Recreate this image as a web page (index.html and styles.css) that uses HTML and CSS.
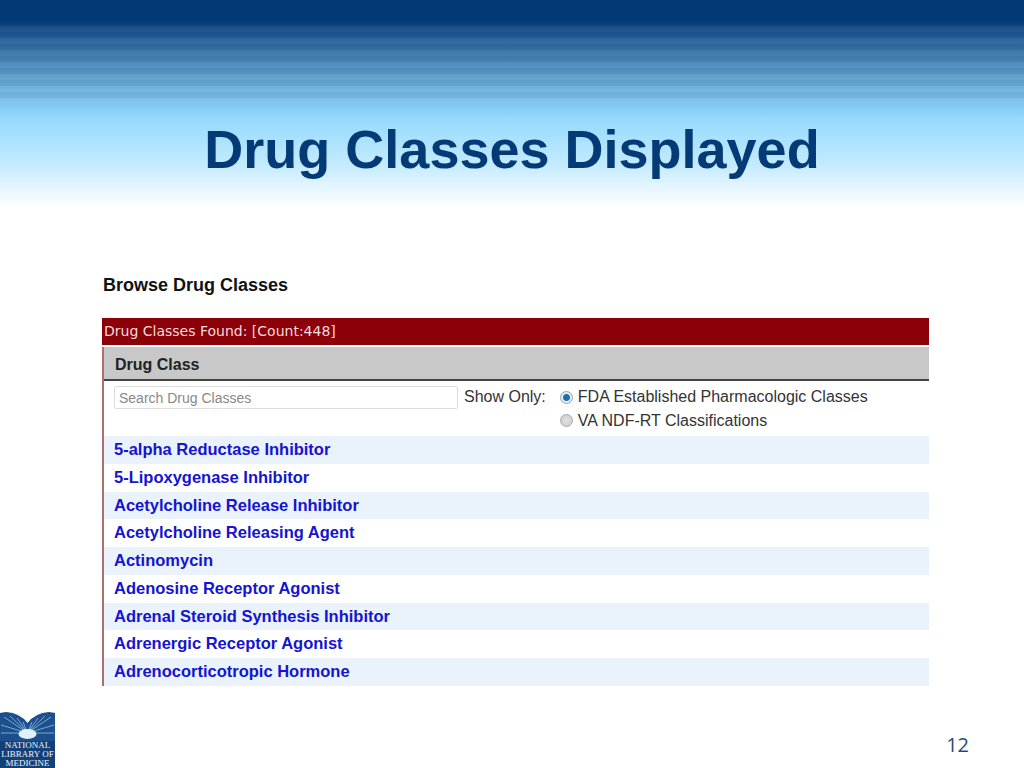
FILE: index.html
```html
<!DOCTYPE html>
<html lang="en">
<head>
    <meta charset="UTF-8">
    <title>Drug Classes Displayed</title>
    <link rel="stylesheet" href="styles.css">
</head>
<body>
    <div class="slide">
        <header class="banner">
            <h1>Drug Classes Displayed</h1>
        </header>

        <main class="content">
            <h2>Browse Drug Classes</h2>
            <div class="found-bar">Drug Classes Found: [Count:448]</div>
            <div class="panel">
                <div class="panel-head">Drug Class</div>
                <div class="filters">
                    <input class="search" type="text" placeholder="Search Drug Classes">
                    <span class="show-only">Show Only:</span>
                    <div class="options">
                        <div class="option"><span class="radio checked"></span>FDA Established Pharmacologic Classes</div>
                        <div class="option"><span class="radio"></span>VA NDF-RT Classifications</div>
                    </div>
                </div>
                <ul class="classes">
                    <li><a href="#">5-alpha Reductase Inhibitor</a></li>
                    <li><a href="#">5-Lipoxygenase Inhibitor</a></li>
                    <li><a href="#">Acetylcholine Release Inhibitor</a></li>
                    <li><a href="#">Acetylcholine Releasing Agent</a></li>
                    <li><a href="#">Actinomycin</a></li>
                    <li><a href="#">Adenosine Receptor Agonist</a></li>
                    <li><a href="#">Adrenal Steroid Synthesis Inhibitor</a></li>
                    <li><a href="#">Adrenergic Receptor Agonist</a></li>
                    <li><a href="#">Adrenocorticotropic Hormone</a></li>
                </ul>
            </div>
        </main>

        <footer class="foot">
            <div class="logo">
                <svg class="logo-art" width="55" height="30" viewBox="0 0 55 30">
                    <path d="M0 3 L6 1 Q20 2 27 12 Q35 2 49 1 L55 3 V30 H0 Z" fill="#1d4f8c"/>
                    <path d="M0 0 H55 V2 L49 1 Q35 2 27.5 12 Q20 2 6 1 L0 2 Z" fill="#fff"/>
                    <g stroke="#8fc0e6" stroke-width="0.8">
                        <path d="M27.5 22 L4 6"/>
                        <path d="M27.5 22 L10 5"/>
                        <path d="M27.5 22 L17 7"/>
                        <path d="M27.5 22 L23 11"/>
                        <path d="M27.5 22 L32 11"/>
                        <path d="M27.5 22 L38 7"/>
                        <path d="M27.5 22 L45 5"/>
                        <path d="M27.5 22 L51 6"/>
                        <path d="M27.5 22 L1 14"/>
                        <path d="M27.5 22 L54 14"/>
                        <path d="M27.5 22 L1 22"/>
                        <path d="M27.5 22 L54 22"/>
                    </g>
                    <ellipse cx="27.5" cy="23" rx="9" ry="5" fill="#dff1fb"/>
                </svg>
                <div class="logo-text">
                    <span>NATIONAL</span>
                    <span>LIBRARY OF</span>
                    <span>MEDICINE</span>
                </div>
            </div>
            <span class="page-no">12</span>
        </footer>
    </div>
</body>
</html>
```

FILE: styles.css
```css
body {
    margin: 0;
    background-color: #fff;
    font-family: "Liberation Sans", Arial, sans-serif;
}

.slide {
    width: 1024px;
    height: 768px;
    overflow: hidden;
    display: flex;
    flex-direction: column;
}

.banner {
    height: 208px;
    box-sizing: border-box;
    padding-top: 116px;
    background: linear-gradient(#033a75 0, #033a75 20px, #1f5590 33px, #3d78ab 53px, #6cb1db 88px, #95d9fd 118px, #c4ebff 165px, #e8f7ff 190px, #fff 208px);
    position: relative;
}

/* banding in the top gradient */
.banner::before {
    content: "";
    position: absolute;
    left: 0;
    right: 0;
    top: 20px;
    height: 84px;
    background: repeating-linear-gradient(rgba(0, 20, 60, 0.05) 0, rgba(0, 20, 60, 0.05) 6px, rgba(255, 255, 255, 0.03) 6px, rgba(255, 255, 255, 0.03) 12px);
}

h1 {
    position: relative;
    margin: 0;
    text-align: center;
    color: #043b76;
    font-size: 54px;
    line-height: 66px;
    font-weight: bold;
}

.content {
    flex: 1;
    padding: 66px 95px 0 102px;
}

h2 {
    margin: 0 0 21px 1px;
    font-size: 18px;
    line-height: 23px;
    color: #111;
    font-weight: bold;
}

.found-bar {
    height: 27px;
    line-height: 27px;
    background-color: #8b0009;
    color: #f4dcdc;
    font-family: "DejaVu Sans", Verdana, sans-serif;
    font-size: 14px;
    padding-left: 2px;
}

.panel {
    margin-top: 2px;
    border-left: 2px solid #ad6f6f;
}

.panel-head {
    height: 32px;
    line-height: 35px;
    padding-left: 11px;
    background-color: #c8c8c8;
    border-bottom: 2px solid #444;
    font-size: 16px;
    font-weight: bold;
    color: #222;
}

.filters {
    display: flex;
    align-items: flex-start;
    padding: 5px 0 0 10px;
    height: 50px;
    font-size: 16px;
    color: #333;
}

.search {
    width: 344px;
    height: 23px;
    box-sizing: border-box;
    border: 1px solid #ddd;
    padding: 0 4px;
    margin: 0;
    font-family: "Liberation Sans", Arial, sans-serif;
    font-size: 14px;
    border-radius: 2px;
}

.search::placeholder {
    color: #888;
}

.show-only {
    margin-left: 6px;
    line-height: 22px;
}

.options {
    margin-left: 14px;
}

.option {
    display: flex;
    align-items: center;
    height: 24.5px;
    margin-top: -1px;
}

.radio {
    width: 13px;
    height: 13px;
    box-sizing: border-box;
    border-radius: 50%;
    border: 1px solid #a9a9a9;
    background: radial-gradient(circle, #e2e2e2, #c9c9c9);
    margin-right: 5px;
}

.radio.checked {
    border-color: #8aa6bd;
    background: radial-gradient(circle, #1d6fb0 0, #1d6fb0 3px, #e6eef4 4px);
}

.classes {
    list-style: none;
    margin: 0;
    padding: 0;
}

.classes li {
    height: 27.75px;
    line-height: 27.75px;
    padding-left: 10px;
    font-size: 16.5px;
    font-weight: bold;
}

.classes li:nth-child(odd) {
    background-color: #eaf2fb;
}

.classes a {
    color: #1414d2;
    text-decoration: none;
}

.foot {
    height: 57px;
    display: flex;
    justify-content: space-between;
    align-items: center;
}

.logo {
    width: 55px;
    height: 57px;
    background-color: #14407a;
}

.logo-art {
    display: block;
}

.logo-text {
    display: flex;
    flex-direction: column;
    align-items: center;
    font-family: "Liberation Serif", "Times New Roman", serif;
    font-size: 9px;
    line-height: 9px;
    color: #eef3f8;
    white-space: nowrap;
}

.page-no {
    margin: 10px 55px 0 0;
    font-family: "Open Sans", sans-serif;
    font-size: 20px;
    color: #1f4e79;
}
```
